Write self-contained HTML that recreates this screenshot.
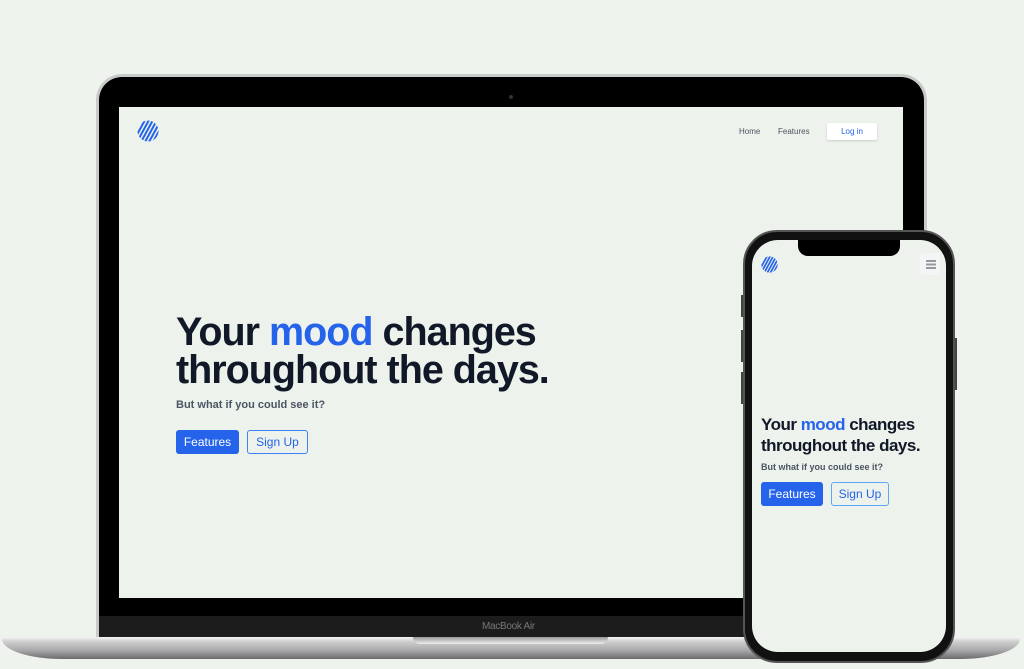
<!DOCTYPE html>
<html><head><style>
*{margin:0;padding:0;box-sizing:border-box}
body{width:1024px;height:669px;background:#eff3ee;position:relative;overflow:hidden;font-family:"Liberation Sans",sans-serif}
.abs{position:absolute}
.lapout{left:96px;top:74px;width:831px;height:570px;border-radius:26px 26px 0 0;background:#c9cbca}
.lapin{left:99px;top:77px;width:825px;height:565px;border-radius:23px 23px 0 0;background:#000}
.screen{left:119px;top:107px;width:784px;height:491px;background:#eef2ec}
.chin{left:99px;top:616px;width:825px;height:22px;background:#1c1c1c}
.base{left:2px;top:637px;width:1018px;height:22px;border-radius:0 0 60px 60px/0 0 20px 20px;background:linear-gradient(#f4f4f4 0,#d0d0d0 20%,#a9a9ab 60%,#6b6b6d 100%)}
.notchb{left:413px;top:637px;width:195px;height:7px;border-radius:0 0 8px 8px;background:linear-gradient(#999,#eee)}
h1{font-size:39.5px;line-height:38px;font-weight:bold;color:#111827;letter-spacing:-1px}
.btn{border-radius:3px;font-size:12px;display:flex;align-items:center;justify-content:center}
.phone{left:743px;top:230px;width:212px;height:433px;border-radius:34px;background:#111;border:2px solid #555}
.pscreen{left:752px;top:240px;width:194px;height:412px;border-radius:26px;background:#eef2ec;overflow:hidden}
</style></head><body>
<div class="abs lapout"></div>
<div class="abs lapin"></div>
<div class="abs" style="left:509px;top:95px;width:4px;height:4px;border-radius:50%;background:#333"></div>
<div class="abs screen">
  <svg class="abs" style="left:18px;top:13px" width="22" height="22" viewBox="0 0 22 22"><defs><clipPath id="c"><circle cx="11" cy="11" r="10.5"/></clipPath></defs><g clip-path="url(#c)" stroke="#2563eb" stroke-width="2"><path d="M-4 22L8 0M0 22L12 0M4 22L16 0M8 22L20 0M12 22L24 0M16 22L28 0"/></g></svg>
  <div class="abs" style="left:620px;top:20px;font-size:8px;color:#4b5563">Home</div>
  <div class="abs" style="left:659px;top:20px;font-size:8px;color:#4b5563">Features</div>
  <div class="abs" style="left:708px;top:16px;width:50px;height:17px;background:#fff;border-radius:2px;box-shadow:0 1px 2px rgba(0,0,0,.15);font-size:8px;color:#2563eb;text-align:center;line-height:17px">Log in</div>
  <h1 class="abs" style="left:57px;top:206px">Your <span style="color:#2563eb">mood</span> changes<br>throughout the days.</h1>
  <div class="abs" style="left:57px;top:292px;font-size:11px;font-weight:bold;color:#4b5563">But what if you could see it?</div>
  <div class="abs btn" style="left:57px;top:323px;width:63px;height:24px;background:#2563eb;color:#fff">Features</div>
  <div class="abs btn" style="left:128px;top:323px;width:61px;height:24px;border:1px solid #3b82f6;color:#2563eb">Sign Up</div>
</div>
<div class="abs chin"></div>
<div class="abs" style="left:482px;top:621px;font-size:10px;color:#777;letter-spacing:-.3px">MacBook Air</div>
<div class="abs base"></div>
<div class="abs notchb"></div>
<div class="abs" style="left:741px;top:295px;width:3px;height:22px;background:#444"></div>
<div class="abs" style="left:741px;top:330px;width:3px;height:32px;background:#444"></div>
<div class="abs" style="left:741px;top:372px;width:3px;height:32px;background:#444"></div>
<div class="abs" style="left:954px;top:338px;width:3px;height:52px;background:#444"></div>
<div class="abs phone"></div>
<div class="abs pscreen">
  <div class="abs" style="left:46px;top:0;width:102px;height:16px;background:#000;border-radius:0 0 10px 10px"></div>
  <svg class="abs" style="left:9px;top:16px" width="17" height="17" viewBox="0 0 22 22"><defs><clipPath id="c2"><circle cx="11" cy="11" r="10.5"/></clipPath></defs><g clip-path="url(#c2)" stroke="#2563eb" stroke-width="2.2"><path d="M-4 22L8 0M0 22L12 0M4 22L16 0M8 22L20 0M12 22L24 0M16 22L28 0"/></g></svg>
  <div class="abs" style="left:168px;top:13px;width:20px;height:22px;background:#f4f5f7;border-radius:3px"></div>
  <div class="abs" style="left:174px;top:20px;width:10px;height:1.5px;background:#999;box-shadow:0 3.5px 0 #999,0 7px 0 #999"></div>
  <div class="abs" style="left:9px;top:174px;font-size:17px;line-height:21px;font-weight:bold;color:#111827;letter-spacing:-.5px">Your <span style="color:#2563eb">mood</span> changes<br>throughout the days.</div>
  <div class="abs" style="left:9px;top:222px;font-size:9px;font-weight:bold;color:#4b5563">But what if you could see it?</div>
  <div class="abs btn" style="left:9px;top:242px;width:62px;height:24px;background:#2563eb;color:#fff">Features</div>
  <div class="abs btn" style="left:79px;top:242px;width:58px;height:24px;border:1px solid #60a5fa;color:#2563eb">Sign Up</div>
</div>
</body></html>
